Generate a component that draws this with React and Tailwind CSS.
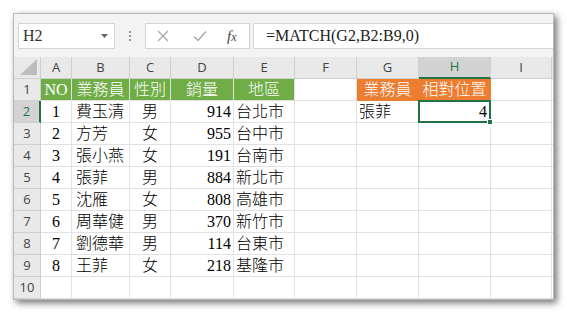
import React from "react";

const data = [
  ["1", "費玉清", "男", "914", "台北市"],
  ["2", "方芳", "女", "955", "台中市"],
  ["3", "張小燕", "女", "191", "台南市"],
  ["4", "張菲", "男", "884", "新北市"],
  ["5", "沈雁", "女", "808", "高雄市"],
  ["6", "周華健", "男", "370", "新竹市"],
  ["7", "劉德華", "男", "114", "台東市"],
  ["8", "王菲", "女", "218", "基隆市"],
];

const cols = ["A", "B", "C", "D", "E", "F", "G", "H", "I"];
const serif = { fontFamily: '"Liberation Serif", "Noto Sans CJK TC", serif' };

function Cell({ children, cls = "" }) {
  return (
    <div
      className={`border-r border-b border-[#e1e1e1] flex items-center text-[16px] font-light leading-none text-black overflow-hidden whitespace-nowrap ${cls}`}
      style={serif}
    >
      {children}
    </div>
  );
}

function ColHead({ label, sel }) {
  return (
    <div
      className={`flex items-center justify-center text-[13px] font-['Open_Sans',sans-serif] border-r border-[#cfcfcf] ${
        sel
          ? "bg-[#d3d3d3] text-[#217346] border-b-2 border-b-[#217346]"
          : "bg-[#e9e9e9] text-[#444] border-b border-b-[#cfcfcf]"
      }`}
    >
      {label}
    </div>
  );
}

function RowHead({ label, sel }) {
  return (
    <div
      className={`flex items-center justify-center text-[13px] font-['Open_Sans',sans-serif] border-b border-[#cfcfcf] ${
        sel
          ? "bg-[#d3d3d3] text-[#217346] border-r-2 border-r-[#217346]"
          : "bg-[#e9e9e9] text-[#444] border-r border-r-[#cfcfcf]"
      }`}
    >
      {label}
    </div>
  );
}

export default function App() {
  return (
    <div className="w-[567px] h-[312px] bg-white pl-[13px] pt-[13px]">
      <div className="w-[541px] h-[287px] bg-white border border-[#b8b8b8] shadow-[3px_3px_7px_rgba(0,0,0,0.55)] flex flex-col overflow-hidden">
        {/* formula bar */}
        <div className="h-[43px] bg-[#f3f3f3] flex items-start pt-[9px] pl-[4px] shrink-0">
          <div className="w-[97px] h-[26px] bg-white border border-[#d4d4d4] flex items-center justify-between pl-[4px] pr-[6px]">
            <span className="text-[16px] text-[#333]" style={serif}>H2</span>
            <svg width="7" height="4" viewBox="0 0 7 4"><path d="M0 0 L7 0 L3.5 4 Z" fill="#666" /></svg>
          </div>
          <div className="w-[30px] h-[26px] flex flex-col items-center justify-center gap-[2px]">
            <span className="w-[2px] h-[2px] bg-[#9a9a9a]" />
            <span className="w-[2px] h-[2px] bg-[#9a9a9a]" />
            <span className="w-[2px] h-[2px] bg-[#9a9a9a]" />
          </div>
          <div className="w-[105px] h-[26px] bg-white border border-[#d4d4d4] flex items-center">
            <svg className="ml-[11px]" width="12" height="12" viewBox="0 0 12 12"><path d="M1 1 L11 11 M11 1 L1 11" stroke="#a8a8a8" strokeWidth="1.2" /></svg>
            <svg className="ml-[24px]" width="14" height="12" viewBox="0 0 14 12"><path d="M1 6.5 L5 10.5 L13 1.5" stroke="#a8a8a8" strokeWidth="1.5" fill="none" /></svg>
            <span className="ml-[20px] italic text-[15px] text-[#444]" style={serif}>f<span className="text-[12px]">x</span></span>
          </div>
          <div className="ml-[3px] flex-1 h-[26px] bg-white border border-[#d4d4d4] border-r-0 flex items-center pl-[12px]">
            <span className="text-[16px] text-[#222]" style={serif}>=MATCH(G2,B2:B9,0)</span>
          </div>
        </div>
        {/* grid */}
        <div className="grid grid-cols-[27px_31px_58px_41px_63px_61px_62px_62px_72px_61px_1fr] grid-rows-[22px_22px_22px_22px_22px_22px_22px_22px_22px_22px_22px] bg-white">
          <div className="bg-[#e9e9e9] border-r border-b border-[#cfcfcf] flex items-end justify-end pr-[3px] pb-[3px]">
            <svg width="17" height="16" viewBox="0 0 17 16"><path d="M17 0 L17 16 L0 16 Z" fill="#bdbdbd" /></svg>
          </div>
          {cols.map((c) => (
            <ColHead key={c} label={c} sel={c === "H"} />
          ))}
          <div className="bg-[#e9e9e9] border-b border-[#cfcfcf]" />

          {/* row 1 */}
          <RowHead label="1" />
          <Cell cls="bg-[#70ad47] border-[#70ad47] text-white justify-center">NO</Cell>
          <Cell cls="bg-[#70ad47] border-[#70ad47] text-white justify-center">業務員</Cell>
          <Cell cls="bg-[#70ad47] border-[#70ad47] text-white justify-center">性別</Cell>
          <Cell cls="bg-[#70ad47] border-[#70ad47] text-white justify-center">銷量</Cell>
          <Cell cls="bg-[#70ad47] border-[#70ad47] text-white justify-center">地區</Cell>
          <Cell />
          <Cell cls="bg-[#ed7d31] border-[#ed7d31] text-white justify-center">業務員</Cell>
          <Cell cls="bg-[#ed7d31] border-[#ed7d31] text-white justify-center">相對位置</Cell>
          <Cell />
          <Cell cls="border-r-0" />

          {data.map((r, i) => (
            <React.Fragment key={i}>
              <RowHead label={String(i + 2)} sel={i === 0} />
              <Cell cls="justify-center">{r[0]}</Cell>
              <Cell cls="pl-[4px]">{r[1]}</Cell>
              <Cell cls="justify-center">{r[2]}</Cell>
              <Cell cls="justify-end pr-[2px]">{r[3]}</Cell>
              <Cell cls="pl-[2px]">{r[4]}</Cell>
              <Cell />
              <Cell cls="pl-[2px]">{i === 0 ? "張菲" : ""}</Cell>
              {i === 0 ? (
                <div className="relative border-r border-b border-[#e1e1e1]">
                  <div className="absolute -top-px -left-px w-[73px] h-[23px] border-2 border-[#217346] flex items-center justify-end pr-[2px] text-[16px] leading-none text-black" style={serif}>
                    4
                  </div>
                  <div className="absolute -right-[3px] -bottom-[3px] w-[6px] h-[6px] bg-[#217346] border border-white" />
                </div>
              ) : (
                <Cell />
              )}
              <Cell />
              <Cell cls="border-r-0" />
            </React.Fragment>
          ))}

          <RowHead label="10" />
          {cols.map((c) => (
            <Cell key={c} />
          ))}
          <Cell cls="border-r-0" />
        </div>
      </div>
    </div>
  );
}
